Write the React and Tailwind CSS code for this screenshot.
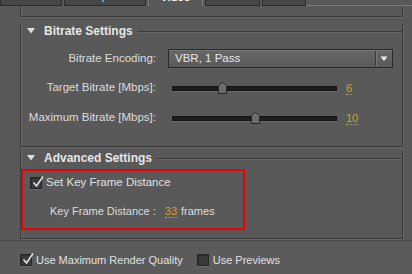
import React from 'react';

const Tri = () => (
  <svg width="8" height="6" viewBox="0 0 8 6" className="shrink-0">
    <path d="M0 0 L8 0 L4 5.5 Z" fill="#dedede" />
  </svg>
);

const CheckBox = ({ checked }) => (
  <span className="relative inline-block w-[12px] h-[12px] shrink-0 bg-[#3a3a3a] border border-[#262626] shadow-[inset_1px_1px_0_#2e2e2e,0_1px_0_#6a6a6a]">
    {checked && (
      <svg width="14" height="14" viewBox="0 0 14 14" className="absolute left-[0px] top-[-3px]">
        <path d="M2.5 7.5 L5.5 11 L12 1.5" fill="none" stroke="#e2e2e2" strokeWidth="1.6" />
      </svg>
    )}
  </span>
);

const Value = ({ children }) => (
  <span className="text-[#d6a01f] border-b border-dotted border-[#d6a01f] leading-[12px]">{children}</span>
);

const Slider = ({ pct }) => (
  <div className="relative w-[165px] h-[5px] bg-[#1e1e1e] border border-[#141414] shadow-[0_1px_0_#6a6a6a]">
    <svg
      width="9"
      height="12"
      viewBox="0 0 9 12"
      className="absolute top-[-5px]"
      style={{ left: `calc(${pct}% - 4px)` }}
    >
      <path d="M0.5 4 L4.5 0.5 L8.5 4 L8.5 11.5 L0.5 11.5 Z" fill="#6b6b6b" stroke="#262626" />
      <path d="M1.5 4.4 L4.5 1.8 L7.5 4.4" fill="none" stroke="#8a8a8a" />
    </svg>
  </div>
);

const Group = ({ title, children, className }) => (
  <div className={`ml-[20px] mr-[9px] border-x border-b border-[#3b3b3b] shadow-[inset_1px_0_0_#666,1px_1px_0_#666] ${className}`}>
    <div className="flex items-center h-[14px] -mt-[7px] pl-[6px]">
      <Tri />
      <span className="ml-[9px] text-[12px] font-bold text-[#e6e6e6] leading-[14px] whitespace-nowrap">{title}</span>
      <div className="flex-1 ml-[5px] h-px bg-[#3b3b3b] shadow-[0_1px_0_#666]" />
    </div>
    {children}
  </div>
);

const tabs = [
  { name: 'Filters', w: 'w-[62px]' },
  { name: 'Multiplexer', w: 'w-[82px]' },
  { name: 'Video', w: 'w-[55px]', active: true },
  { name: 'Audio', w: 'w-[55px]' },
  { name: 'FTP', w: 'w-[44px]' },
];

export default function App() {
  return (
    <div className="w-[412px] h-[274px] overflow-hidden bg-[#595959] font-['Liberation_Sans',Arial,sans-serif] text-[11px] text-[#dcdcdc]">
      {/* Tabs (cut off at the top) */}
      <div className="flex items-end h-[6px] overflow-hidden">
        <div className="flex items-end gap-[2px]">
          {tabs.map(t => (
            <div
              key={t.name}
              className={`${t.w} h-[20px] flex items-end justify-center pb-[1px] ${
                t.active
                  ? 'bg-[#595959] border-x border-[#7a7a7a] text-white font-bold'
                  : 'bg-[#474747] border border-[#2c2c2c] text-[#cfcfcf]'
              }`}
            >
              {t.name}
            </div>
          ))}
        </div>
        <div className="flex-1 h-px bg-[#7a7a7a]" />
      </div>

      {/* Previous group (scrolled away) */}
      <div className="ml-[20px] mr-[9px] h-[11px] border-x border-b border-[#3b3b3b] shadow-[inset_1px_0_0_#666,1px_1px_0_#666]" />

      <Group title="Bitrate Settings" className="mt-[14px] pb-[20px]">
        <div className="flex items-center mt-[11px]">
          <div className="w-[135px] text-right text-[11.5px]">Bitrate Encoding:</div>
          <div className="ml-[12px] w-[225px] h-[19px] flex items-center bg-gradient-to-b from-[#676767] to-[#5a5a5a] border border-[#2a2a2a] shadow-[inset_0_1px_0_#777]">
            <span className="flex-1 pl-[6px] text-[#e6e6e6] text-[11.5px]">VBR, 1 Pass</span>
            <div className="w-px h-[15px] bg-[#3a3a3a] shadow-[1px_0_0_#777]" />
            <svg width="16" height="8" viewBox="0 0 16 8">
              <path d="M4.5 1.5 L11.5 1.5 L8 6 Z" fill="#eeeeee" />
            </svg>
          </div>
        </div>
        <div className="flex items-center h-[16px] mt-[12px]">
          <div className="w-[135px] text-right text-[11.5px]">Target Bitrate [Mbps]:</div>
          <div className="ml-[16px]"><Slider pct={30} /></div>
          <div className="ml-[9px]"><Value>6</Value></div>
        </div>
        <div className="flex items-center h-[16px] mt-[14px]">
          <div className="w-[135px] text-right text-[11.5px]">Maximum Bitrate [Mbps]:</div>
          <div className="ml-[16px]"><Slider pct={50} /></div>
          <div className="ml-[9px]"><Value>10</Value></div>
        </div>
      </Group>

      <Group title="Advanced Settings" className="mt-[11px] pb-[8px]">
        <div className="mt-[4px] w-[224px] h-[61px] border-2 border-[#ee0000] pl-[7px] pt-[6px]">
          <div className="flex items-center gap-[4px] h-[12px]">
            <CheckBox checked />
            <span className="text-[#e0e0e0] text-[11.5px]">Set Key Frame Distance</span>
          </div>
          <div className="flex items-center h-[14px] mt-[15px] pl-[20px]">
            <span>Key Frame Distance :</span>
            <span className="ml-[9px]"><Value>33</Value></span>
            <span className="ml-[4px]">frames</span>
          </div>
        </div>
      </Group>

      {/* Bottom options */}
      <div className="mt-[1px] border-t border-[#4a4a4a] bg-[#5b5b5b] h-[40px] pl-[20px] pt-[13px] flex items-start gap-[4px]">
        <div className="flex items-center gap-[4px] h-[12px]">
          <CheckBox checked />
          <span className="text-[#e0e0e0]">Use Maximum Render Quality</span>
        </div>
        <div className="flex items-center gap-[4px] h-[12px] ml-[10px]">
          <CheckBox />
          <span className="text-[#e0e0e0]">Use Previews</span>
        </div>
      </div>
    </div>
  );
}
